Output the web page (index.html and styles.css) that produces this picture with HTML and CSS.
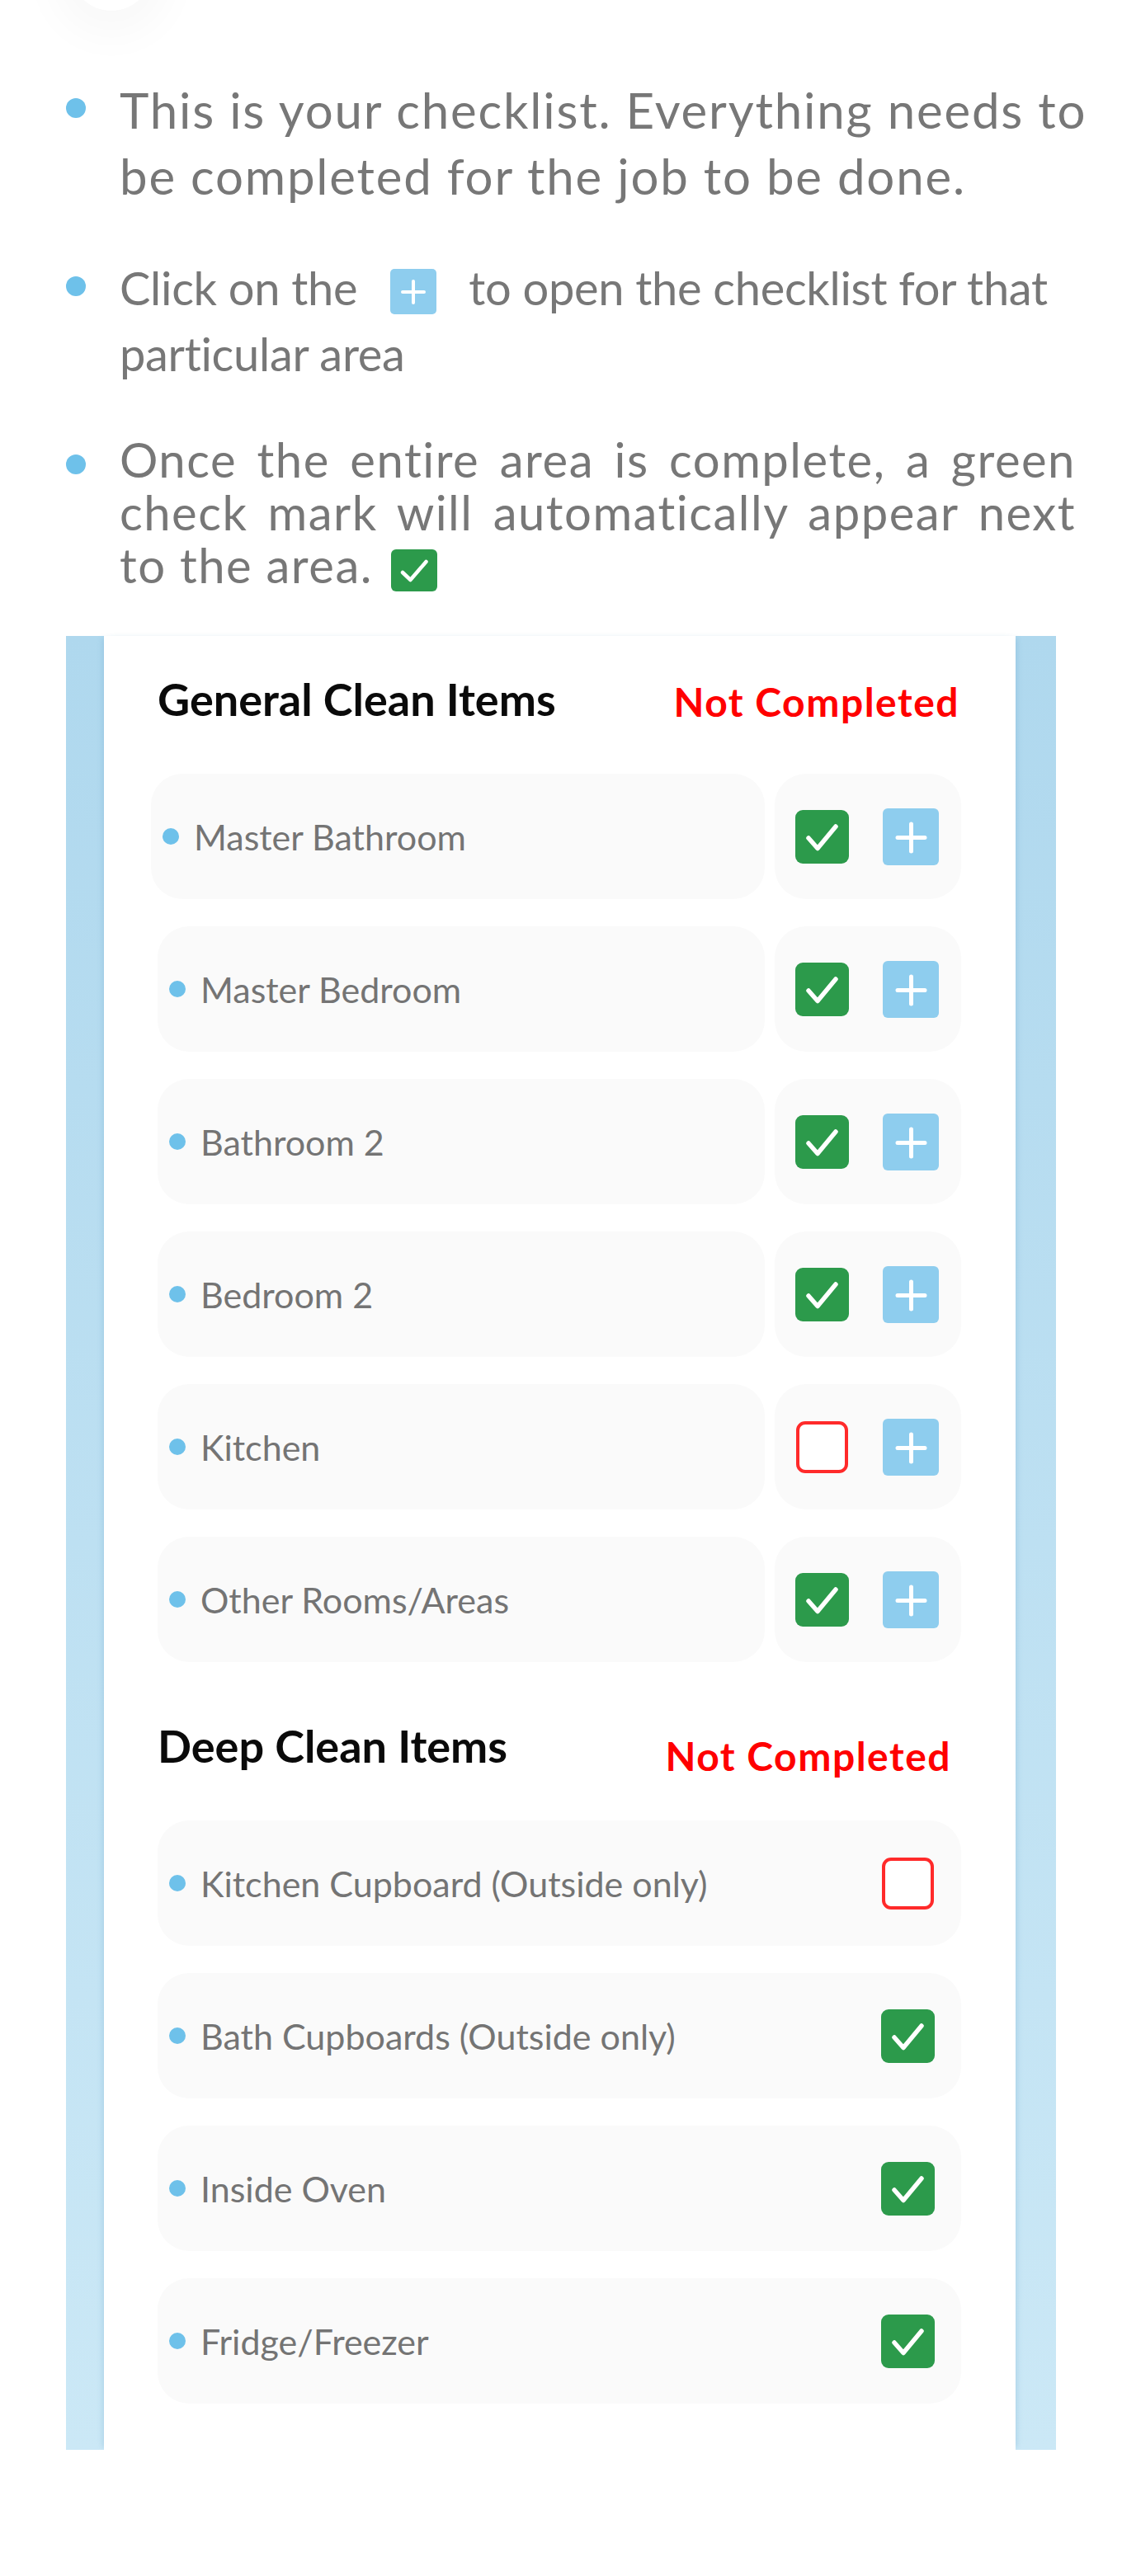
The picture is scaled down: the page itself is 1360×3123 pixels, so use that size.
FILE: index.html
```html
<!DOCTYPE html>
<html lang="en">
<head>
<meta charset="utf-8">
<title>Checklist guide</title>
<link rel="stylesheet" href="styles.css">
</head>
<body>
<svg class="sprite" width="0" height="0" aria-hidden="true">
  <symbol id="ico-check" viewBox="0 0 65 65">
    <rect x="0" y="0" width="65" height="65" rx="9" fill="#2c9a4b"/>
    <polyline points="16,34 27,46.5 49,20" fill="none" stroke="#fff" stroke-width="5.5" stroke-linecap="round" stroke-linejoin="round"/>
  </symbol>
  <symbol id="ico-plus" viewBox="0 0 68 69">
    <rect x="0" y="0" width="68" height="69" rx="6" fill="#8ecdee"/>
    <path d="M18 35.5H51M34.5 19V52" fill="none" stroke="#fff" stroke-width="5" stroke-linecap="round"/>
  </symbol>
</svg>
<main class="page">
  <div class="top-mark"></div>
  <ul class="tips">
    <li class="tip tip-wide"><p>This is your checklist. Everything needs to<br>be completed for the job to be done.</p></li>
    <li class="tip tip-normal"><p>Click on the <svg class="ico ico-plus-inline" width="56" height="55" viewBox="0 0 56 55"><rect width="56" height="55" rx="5" fill="#8ecdee"/><path d="M15 28H41M28 15V41" fill="none" stroke="#fff" stroke-width="4" stroke-linecap="round"/></svg> to open the checklist for that<br>particular area</p></li>
    <li class="tip tip-mid"><p>Once the entire area is complete, a green check mark will automatically appear next to the area. <svg class="ico ico-check-inline" width="56" height="51" viewBox="0 0 56 51"><rect width="56" height="51" rx="6" fill="#2c9a4b"/><polyline points="14,28 23.5,37 42.5,15" fill="none" stroke="#fff" stroke-width="4.5" stroke-linecap="round" stroke-linejoin="round"/></svg></p></li>
  </ul>

  <section class="shot">
    <div class="panel">
      <div class="sec-head">
        <h2 class="sec-title">General Clean Items</h2>
        <span class="status">Not Completed</span>
      </div>
      <div class="rows">
        <div class="row">
          <div class="label label-shift">Master Bathroom</div>
          <div class="actions">
            <svg class="box"><use href="#ico-check"/></svg>
            <svg class="plus"><use href="#ico-plus"/></svg>
          </div>
        </div>
        <div class="row">
          <div class="label">Master Bedroom</div>
          <div class="actions">
            <svg class="box"><use href="#ico-check"/></svg>
            <svg class="plus"><use href="#ico-plus"/></svg>
          </div>
        </div>
        <div class="row">
          <div class="label">Bathroom 2</div>
          <div class="actions">
            <svg class="box"><use href="#ico-check"/></svg>
            <svg class="plus"><use href="#ico-plus"/></svg>
          </div>
        </div>
        <div class="row">
          <div class="label">Bedroom 2</div>
          <div class="actions">
            <svg class="box"><use href="#ico-check"/></svg>
            <svg class="plus"><use href="#ico-plus"/></svg>
          </div>
        </div>
        <div class="row">
          <div class="label">Kitchen</div>
          <div class="actions">
            <span class="box empty"></span>
            <svg class="plus"><use href="#ico-plus"/></svg>
          </div>
        </div>
        <div class="row">
          <div class="label">Other Rooms/Areas</div>
          <div class="actions">
            <svg class="box"><use href="#ico-check"/></svg>
            <svg class="plus"><use href="#ico-plus"/></svg>
          </div>
        </div>
      </div>

      <div class="sec-head sec-head-deep">
        <h2 class="sec-title">Deep Clean Items</h2>
        <span class="status status-low">Not Completed</span>
      </div>
      <div class="rows">
        <div class="row row-full">
          <div class="label">Kitchen Cupboard (Outside only)</div>
          <span class="box empty"></span>
        </div>
        <div class="row row-full">
          <div class="label">Bath Cupboards (Outside only)</div>
          <svg class="box"><use href="#ico-check"/></svg>
        </div>
        <div class="row row-full">
          <div class="label">Inside Oven</div>
          <svg class="box"><use href="#ico-check"/></svg>
        </div>
        <div class="row row-full">
          <div class="label">Fridge/Freezer</div>
          <svg class="box"><use href="#ico-check"/></svg>
        </div>
      </div>
    </div>
  </section>
</main>
</body>
</html>
```

FILE: styles.css
```css
* { box-sizing: border-box; }

html, body {
  margin: 0;
  padding: 0;
  background: #ffffff;
}

body {
  font-family: Lato, "Liberation Sans", Arial, sans-serif;
  color: #777777;
  min-height: 3123px;
}

.sprite {
  position: absolute;
  width: 0;
  height: 0;
  overflow: hidden;
}

.page {
  width: 1360px;
  overflow: hidden;
}

/* faint decorative circle cut by the top edge */
.top-mark {
  display: flow-root;
  height: 93px;
}
.top-mark::before {
  content: "";
  display: block;
  width: 100px;
  height: 100px;
  margin: -87px 0 0 85px;
  border-radius: 50%;
  background: #ffffff;
  box-shadow: 0 10px 50px 22px rgba(0, 0, 0, 0.028);
}

/* instruction bullets */
.tips {
  list-style: none;
  margin: 0;
  padding: 0 0 0 80px;
  display: flex;
  flex-direction: column;
  gap: 56px;
}

.tip {
  display: grid;
  grid-template-columns: 65px 1fr;
  align-items: start;
}
.tip::before {
  content: "";
  width: 24px;
  height: 24px;
  margin-top: 26px;
  border-radius: 50%;
  background: #6ec1ea;
}
.tip p {
  margin: 0;
  color: #777777;
}

.tip-wide p {
  font-size: 60px;
  line-height: 80px;
  letter-spacing: 1.8px;
  white-space: nowrap;
}
.tip-normal p {
  font-size: 56px;
  line-height: 80px;
  letter-spacing: -0.3px;
  white-space: nowrap;
}
.tip-mid p {
  width: 1159px;
  font-size: 58px;
  line-height: 64px;
  letter-spacing: 1.5px;
  text-align: justify;
}

.ico {
  display: inline-block;
}
.ico-plus-inline {
  vertical-align: -11px;
  margin: 0 25px 0 26px;
}
.ico-check-inline {
  vertical-align: -10px;
  margin-left: 6px;
}

/* phone screenshot frame */
.shot {
  margin: 54px 80px 0;
  background: linear-gradient(180deg, #afd8ee 0%, #bde0f2 50%, #cbe8f6 100%);
  padding: 0 49px 0 46px;
}

.panel {
  background: #ffffff;
  padding: 47px 66px 56px 65px;
  box-shadow: -5px 0 6px -3px rgba(80, 145, 190, 0.22), 5px 0 6px -3px rgba(80, 145, 190, 0.22);
}

.sec-head {
  display: flex;
  justify-content: space-between;
  align-items: flex-start;
  height: 60px;
  margin-bottom: 60px;
}
.sec-head-deep {
  margin-top: 72px;
}

.sec-title {
  margin: 0;
  font-size: 54px;
  line-height: 60px;
  font-weight: 700;
  color: #0a0a0a;
}

.status {
  margin: 5px 2px 0 0;
  font-size: 48px;
  line-height: 55px;
  font-weight: 700;
  letter-spacing: 1.5px;
  color: #ff0000;
}
.status-low {
  margin: 18px 12px 0 0;
  line-height: 48px;
}

.rows {
  display: flex;
  flex-direction: column;
  gap: 33px;
}

.row {
  display: flex;
  gap: 12px;
  height: 152px;
}

.label {
  flex: 1;
  display: flex;
  align-items: center;
  gap: 18px;
  padding-left: 14px;
  background: #fafafa;
  border-radius: 38px;
  font-size: 43px;
  color: #747474;
}
.label::before {
  content: "";
  width: 20px;
  height: 20px;
  border-radius: 50%;
  background: #6ec1ea;
  flex: none;
}
.label-shift {
  margin-left: -8px;
}

.actions {
  width: 226px;
  flex: none;
  display: flex;
  align-items: center;
  gap: 41px;
  padding-left: 25px;
  background: #fafafa;
  border-radius: 38px;
}

.box {
  width: 65px;
  height: 65px;
  flex: none;
}
.box.empty {
  display: block;
  width: 63px;
  height: 63px;
  margin: 0 1px;
  border: 4px solid #ff2a2a;
  border-radius: 11px;
  background: #ffffff;
}

.plus {
  width: 68px;
  height: 69px;
  flex: none;
}

.row-full {
  align-items: center;
  background: #fafafa;
  border-radius: 38px;
  padding-right: 32px;
}
.row-full .label {
  align-self: stretch;
  background: transparent;
}
```
